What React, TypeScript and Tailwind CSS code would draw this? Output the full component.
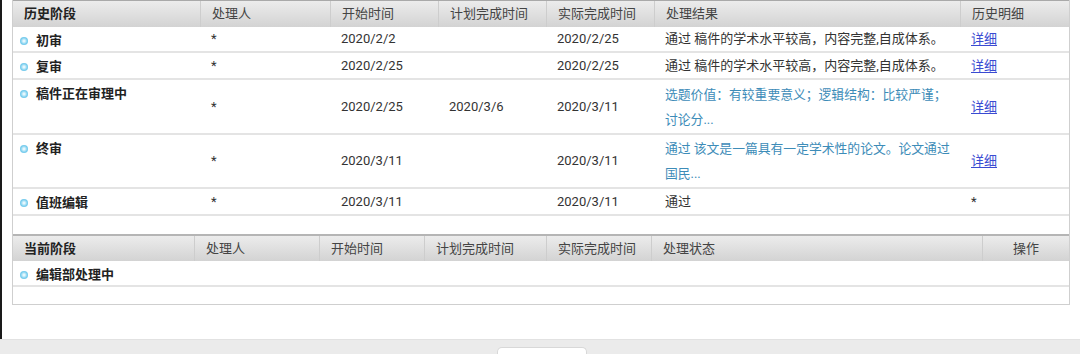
import type { FC, ReactNode } from "react";

type HistoryRow = {
  stage: string;
  handler: string;
  start: string;
  planned: string;
  actual: string;
  result: ReactNode;
  detail: "link" | "star";
  height: string;
};

const historyCols = "grid grid-cols-[187px_130px_108px_108px_108px_306px_1fr]";
const currentCols = "grid grid-cols-[181px_125px_105px_122px_105px_331px_1fr]";

const historyRows: HistoryRow[] = [
  {
    stage: "初审",
    handler: "*",
    start: "2020/2/2",
    planned: "",
    actual: "2020/2/25",
    result: "通过 稿件的学术水平较高，内容完整,自成体系。",
    detail: "link",
    height: "h-[26px]",
  },
  {
    stage: "复审",
    handler: "*",
    start: "2020/2/25",
    planned: "",
    actual: "2020/2/25",
    result: "通过 稿件的学术水平较高，内容完整,自成体系。",
    detail: "link",
    height: "h-[27px]",
  },
  {
    stage: "稿件正在审理中",
    handler: "*",
    start: "2020/2/25",
    planned: "2020/3/6",
    actual: "2020/3/11",
    result: (
      <span className="whitespace-nowrap text-[12.8px] leading-[25px] text-[#3d8cb8]">
        选题价值：有较重要意义；逻辑结构：比较严谨；
        <br />
        讨论分...
      </span>
    ),
    detail: "link",
    height: "h-[55px]",
  },
  {
    stage: "终审",
    handler: "*",
    start: "2020/3/11",
    planned: "",
    actual: "2020/3/11",
    result: (
      <span className="whitespace-nowrap text-[12.8px] leading-[25px] text-[#3d8cb8]">
        通过 该文是一篇具有一定学术性的论文。论文通过
        <br />
        国民...
      </span>
    ),
    detail: "link",
    height: "h-[54px]",
  },
  {
    stage: "值班编辑",
    handler: "*",
    start: "2020/3/11",
    planned: "",
    actual: "2020/3/11",
    result: "通过",
    detail: "star",
    height: "h-[27px]",
  },
];

const Bullet: FC = () => (
  <span className="mr-[8px] inline-block h-[8px] w-[8px] shrink-0 rounded-full bg-[radial-gradient(circle,#e6f7fd_15%,#7fd0ef_55%,#4fb6e2_100%)]" />
);

const StageCell: FC<{ name: string }> = ({ name }) => (
  <div className="flex items-start pl-[7px] pt-[5px]">
    <span className="flex h-[18px] items-center">
      <Bullet />
      <span className="font-bold text-[#222]">{name}</span>
    </span>
  </div>
);

const HeaderCell: FC<{ children: ReactNode; first?: boolean; center?: boolean }> = ({
  children,
  first,
  center,
}) => (
  <div
    className={`flex items-center px-[11px] ${first ? "" : "border-l border-[#cdcdcd]"} ${
      center ? "justify-center" : ""
    }`}
  >
    {children}
  </div>
);

const Cell: FC<{ children?: ReactNode }> = ({ children }) => (
  <div className="flex items-center whitespace-nowrap px-[11px]">{children}</div>
);

const DetailLink: FC = () => (
  <a href="#" className="text-[#3a4bd2] underline underline-offset-2">
    详细
  </a>
);

export default function App() {
  return (
    <div className="relative flex h-[354px] w-[1080px] flex-col overflow-hidden bg-white font-['Roboto','Noto_Sans_CJK_SC',sans-serif] text-[13px] text-[#333]">
      <div className="flex h-[339px]">
        <div className="w-[2px] shrink-0 bg-[#1a1a1a]" />
        <div className="ml-[10px] w-[1058px]">
          <div className="border-x border-b border-[#cfcfcf]">
            {/* 历史阶段 */}
            <div
              className={`${historyCols} h-[27px] border-t border-[#a9a9a9] bg-linear-to-b from-[#ececec] to-[#d3d3d3] text-[#444]`}
            >
              <HeaderCell first>
                <span className="font-bold text-[#222]">历史阶段</span>
              </HeaderCell>
              <HeaderCell>处理人</HeaderCell>
              <HeaderCell>开始时间</HeaderCell>
              <HeaderCell>计划完成时间</HeaderCell>
              <HeaderCell>实际完成时间</HeaderCell>
              <HeaderCell>处理结果</HeaderCell>
              <HeaderCell>历史明细</HeaderCell>
            </div>
            {historyRows.map((row) => (
              <div key={row.stage} className={`${historyCols} ${row.height} border-b-2 border-[#e4e4e4]`}>
                <StageCell name={row.stage} />
                <Cell>{row.handler}</Cell>
                <Cell>{row.start}</Cell>
                <Cell>{row.planned}</Cell>
                <Cell>{row.actual}</Cell>
                <Cell>{row.result}</Cell>
                <Cell>{row.detail === "link" ? <DetailLink /> : "*"}</Cell>
              </div>
            ))}
            <div className="h-[18px]" />

            {/* 当前阶段 */}
            <div
              className={`${currentCols} h-[27px] border-t-2 border-[#b5b5b5] bg-linear-to-b from-[#ececec] to-[#d3d3d3] text-[#444]`}
            >
              <HeaderCell first>
                <span className="font-bold text-[#222]">当前阶段</span>
              </HeaderCell>
              <HeaderCell>处理人</HeaderCell>
              <HeaderCell>开始时间</HeaderCell>
              <HeaderCell>计划完成时间</HeaderCell>
              <HeaderCell>实际完成时间</HeaderCell>
              <HeaderCell>处理状态</HeaderCell>
              <HeaderCell center>操作</HeaderCell>
            </div>
            <div className={`${currentCols} h-[26px] border-b-2 border-[#e4e4e4]`}>
              <StageCell name="编辑部处理中" />
              <Cell />
              <Cell />
              <Cell />
              <Cell />
              <Cell />
              <Cell />
            </div>
            <div className="h-[17px]" />
          </div>
        </div>
      </div>
      <div className="flex h-[15px] justify-center border-t border-[#e2e2e2] bg-[#ebebeb] pt-[7px]">
        <div className="ml-[3px] w-[90px] rounded-t-[5px] border border-b-0 border-[#d8d8d8] bg-white" />
      </div>
    </div>
  );
}
